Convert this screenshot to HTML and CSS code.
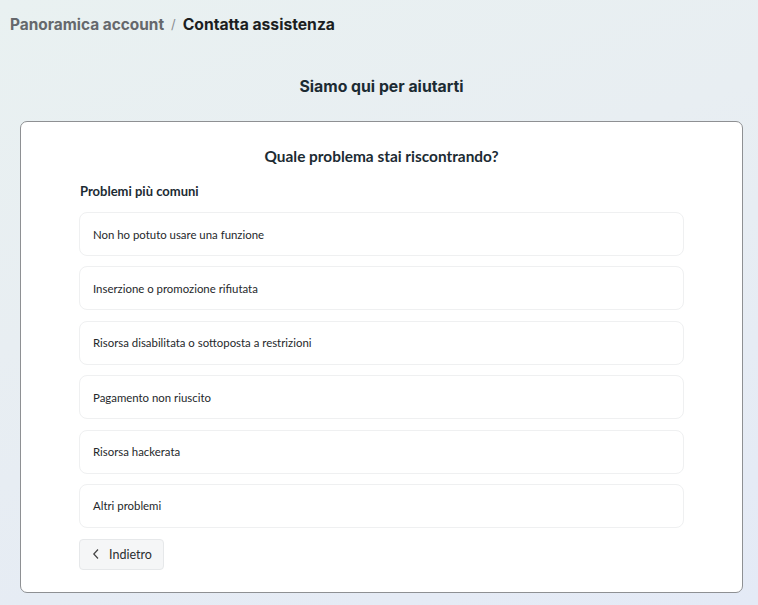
FILE: index.html
```html
<!doctype html>
<html>
	<head>
		<title>Contatta assistenza</title>
		<meta charset="utf-8" />
		<link rel="stylesheet" href="styles.css">
	</head>
	<body>
		<div class="crumbs">
			<span class="crumb-link">Panoramica account</span>
			<span class="crumb-sep">/</span>
			<span class="crumb-current">Contatta assistenza</span>
		</div>
		<h1 class="page-title">Siamo qui per aiutarti</h1>
		<div class="card">
			<h2 class="card-title">Quale problema stai riscontrando?</h2>
			<div class="section">
				<div class="section-label">Problemi più comuni</div>
				<div class="list">
					<div class="item">Non ho potuto usare una funzione</div>
					<div class="item">Inserzione o promozione rifiutata</div>
					<div class="item">Risorsa disabilitata o sottoposta a restrizioni</div>
					<div class="item">Pagamento non riuscito</div>
					<div class="item">Risorsa hackerata</div>
					<div class="item">Altri problemi</div>
				</div>
				<button class="back">
					<svg width="8" height="12" viewBox="0 0 8 12"><path d="M6 1.5 L1.8 6 L6 10.5" fill="none" stroke="#444" stroke-width="1.2"/></svg>
					Indietro
				</button>
			</div>
		</div>
	</body>
</html>
```

FILE: styles.css
```css
* { margin: 0; padding: 0; box-sizing: border-box; }
html { height: 100%; }
body { font-family: "Inter", "Noto Sans", sans-serif; min-height: 100%; padding: 14px 15px 0 20px; background: linear-gradient(160deg, #e9f1f1 0%, #e8eef2 40%, #e4eaf6 100%); color: #1c1e21; }
.crumbs { font-size: 15.4px; font-weight: 700; display: flex; align-items: center; gap: 7px; margin-left: -10px; height: 20px; }
.crumb-link { color: #65686c; }
.crumb-sep { color: #8a8d91; font-weight: 400; font-size: 13px; }
.crumb-current { color: #1c1e21; font-size: 15.7px; }
.page-title { font-size: 15.8px; font-weight: 700; text-align: center; margin-top: 43px; line-height: 20px; color: #1c2b33; }
.card { background: #fff; border: 1px solid #8e9093; border-radius: 7px; margin-top: 24px; height: 472px; padding: 25px 58px 0 58px; }
.card-title { font-family: "Lato", sans-serif; font-size: 15.4px; font-weight: 700; text-align: center; color: #1c2b33; line-height: 18px; }
.section { margin-top: 18px; }
.section-label { font-family: "Lato", sans-serif; font-size: 13px; font-weight: 700; color: #1c2b33; margin-left: 1px; line-height: 16px; }
.list { display: flex; flex-direction: column; gap: 10.4px; margin-top: 13px; }
.item { height: 44px; border: 1px solid #eff0f1; border-radius: 8px; display: flex; align-items: center; padding-left: 13px; font-family: "Lato", sans-serif; font-size: 11.4px; color: #25282b; }
.back { margin-top: 11px; height: 31px; width: 85px; display: flex; align-items: center; gap: 9px; padding-left: 12px; background: #f5f6f7; border: 1px solid #e6e8ea; border-radius: 4px; font-family: "Lato", sans-serif; font-size: 12.5px; color: #2b2e31; }
```
